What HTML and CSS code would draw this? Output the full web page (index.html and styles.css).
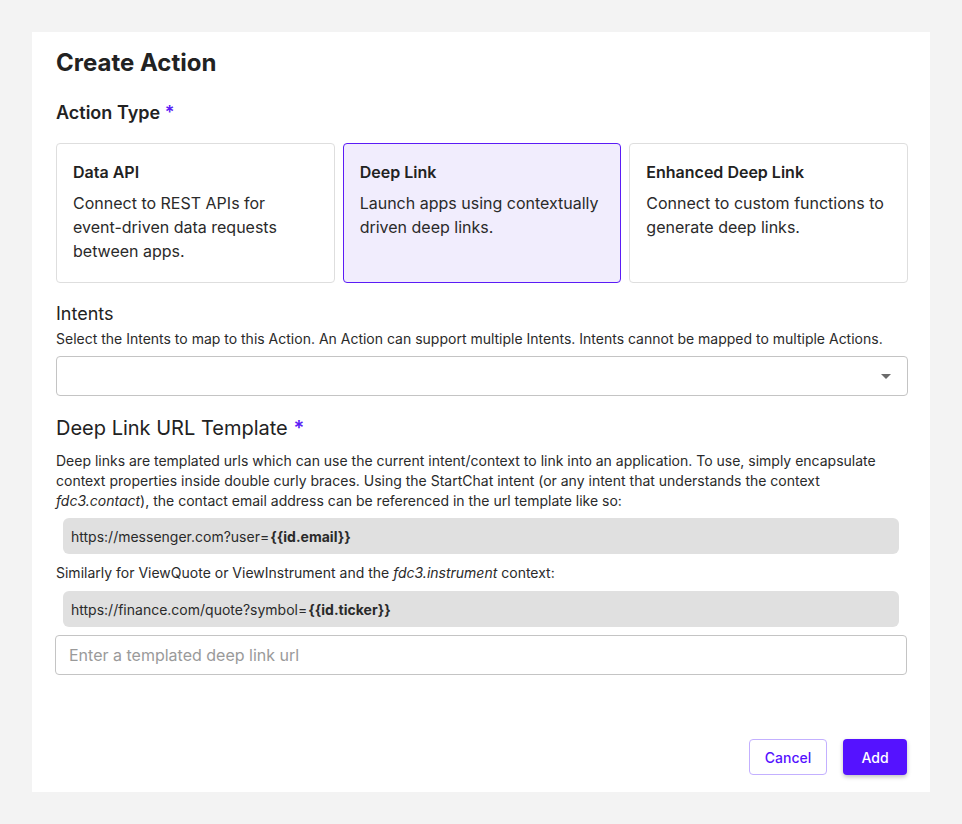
FILE: index.html
```html
<!DOCTYPE html>
<html lang="en">
<head>
<meta charset="utf-8">
<title>Create Action</title>
<link rel="stylesheet" href="styles.css">
</head>
<body>
<div class="card">
  <h1 class="title">Create Action</h1>
  <h2 class="section-label">Action Type <span class="req">*</span></h2>
  <div class="types">
    <div class="type">
      <div class="type-title">Data API</div>
      <div class="type-desc">Connect to REST APIs for event-driven data requests between apps.</div>
    </div>
    <div class="type selected">
      <div class="type-title">Deep Link</div>
      <div class="type-desc">Launch apps using contextually driven deep links.</div>
    </div>
    <div class="type">
      <div class="type-title">Enhanced Deep Link</div>
      <div class="type-desc">Connect to custom functions to generate deep links.</div>
    </div>
  </div>

  <div class="field-label">Intents</div>
  <div class="help">Select the Intents to map to this Action. An Action can support multiple Intents. Intents cannot be mapped to multiple Actions.</div>
  <div class="select">
    <svg class="caret" width="10" height="5" viewBox="0 0 10 5"><path d="M0 0h10L5 5z" fill="#6b6b6b"/></svg>
  </div>

  <div class="field-label large">Deep Link URL Template <span class="req">*</span></div>
  <p class="para">Deep links are templated urls which can use the current intent/context to link into an application. To use, simply encapsulate context properties inside double curly braces. Using the StartChat intent (or any intent that understands the context <em>fdc3.contact</em>), the contact email address can be referenced in the url template like so:</p>
  <div class="code">https://messenger.com?user=<b>{{id.email}}</b></div>
  <p class="para single">Similarly for ViewQuote or ViewInstrument and the <em>fdc3.instrument</em> context:</p>
  <div class="code code-second">https://finance.com/quote?symbol=<b>{{id.ticker}}</b></div>
  <input class="input" type="text" placeholder="Enter a templated deep link url">

  <div class="actions">
    <button class="btn btn-outline">Cancel</button>
    <button class="btn btn-primary">Add</button>
  </div>
</div>
</body>
</html>
```

FILE: styles.css
```css
* { box-sizing: border-box; }
html, body { margin: 0; padding: 0; }
body {
  background: #f3f3f3;
  font-family: Inter, "Noto Sans", sans-serif;
  color: #222;
  padding: 32px;
}
.card {
  background: #fff;
  width: 898px;
  height: 760px;
  padding: 16px 23px 0 24px;
  display: flex;
  flex-direction: column;
}
.title {
  margin: 0;
  font-size: 24px;
  font-weight: 700;
  line-height: 30px;
  color: #222;
}
.section-label {
  margin: 23px 0 0;
  font-size: 18px;
  font-weight: 600;
  line-height: 24px;
}
.req { color: #5b1cf6; font-weight: 600; }
.types {
  margin-top: 18px;
  display: grid;
  grid-template-columns: repeat(3, 1fr);
  gap: 8px;
  width: 852px;
}
.type {
  height: 140px;
  border: 1px solid #dedede;
  border-radius: 4px;
  padding: 16px 16px 0;
  background: #fff;
}
.type.selected {
  background: #f1edfd;
  border-color: #5b1cf6;
}
.type-title {
  font-size: 16px;
  font-weight: 600;
  line-height: 24px;
  color: #222;
}
.type-desc {
  margin-top: 7px;
  font-size: 16px;
  line-height: 24px;
  color: #2a2a2a;
}
.field-label {
  margin-top: 18px;
  font-size: 18px;
  line-height: 26px;
  color: #222;
}
.field-label.large {
  margin-top: 19px;
  font-size: 20px;
  line-height: 26px;
}
.help {
  margin-top: 2px;
  font-size: 14px;
  line-height: 20px;
  color: #2a2a2a;
}
.select {
  margin-top: 7px;
  width: 852px;
  height: 40px;
  border: 1px solid #c4c4c4;
  border-radius: 4px;
  display: flex;
  align-items: center;
  justify-content: flex-end;
  padding-right: 16px;
}
.para {
  margin: 10px 0 0;
  font-size: 14px;
  line-height: 20px;
  color: #2a2a2a;
  width: 852px;
}
.para.single { margin-top: 9px; }
.code {
  margin: 7px 0 0 7px;
  width: 836px;
  height: 36px;
  background: #e0e0e0;
  border-radius: 6px;
  padding: 0 8px;
  display: flex;
  align-items: center;
  font-size: 14px;
  color: #2a2a2a;
}
.code.code-second { margin-top: 8px; }
.code b { font-weight: 700; margin-left: 1px; }
.input {
  margin: 8px 0 0 -1px;
  width: 852px;
  height: 40px;
  border: 1px solid #c4c4c4;
  border-radius: 4px;
  padding: 0 13px;
  font-family: Inter, "Noto Sans", sans-serif;
  font-size: 16px;
  color: #222;
  outline: none;
}
.input::placeholder { color: #9a9a9a; }
.actions {
  margin-top: auto;
  margin-bottom: 17px;
  display: flex;
  justify-content: flex-end;
  gap: 16px;
}
.btn {
  height: 36px;
  border-radius: 4px;
  font-family: Inter, "Noto Sans", sans-serif;
  font-size: 14px;
  font-weight: 500;
  cursor: pointer;
}
.btn-outline {
  width: 78px;
  background: #fff;
  color: #5512ff;
  border: 1px solid #c3b0ff;
}
.btn-primary {
  width: 64px;
  background: #5512ff;
  color: #fff;
  border: none;
  box-shadow: 0 2px 4px rgba(0,0,0,0.25);
}
```
